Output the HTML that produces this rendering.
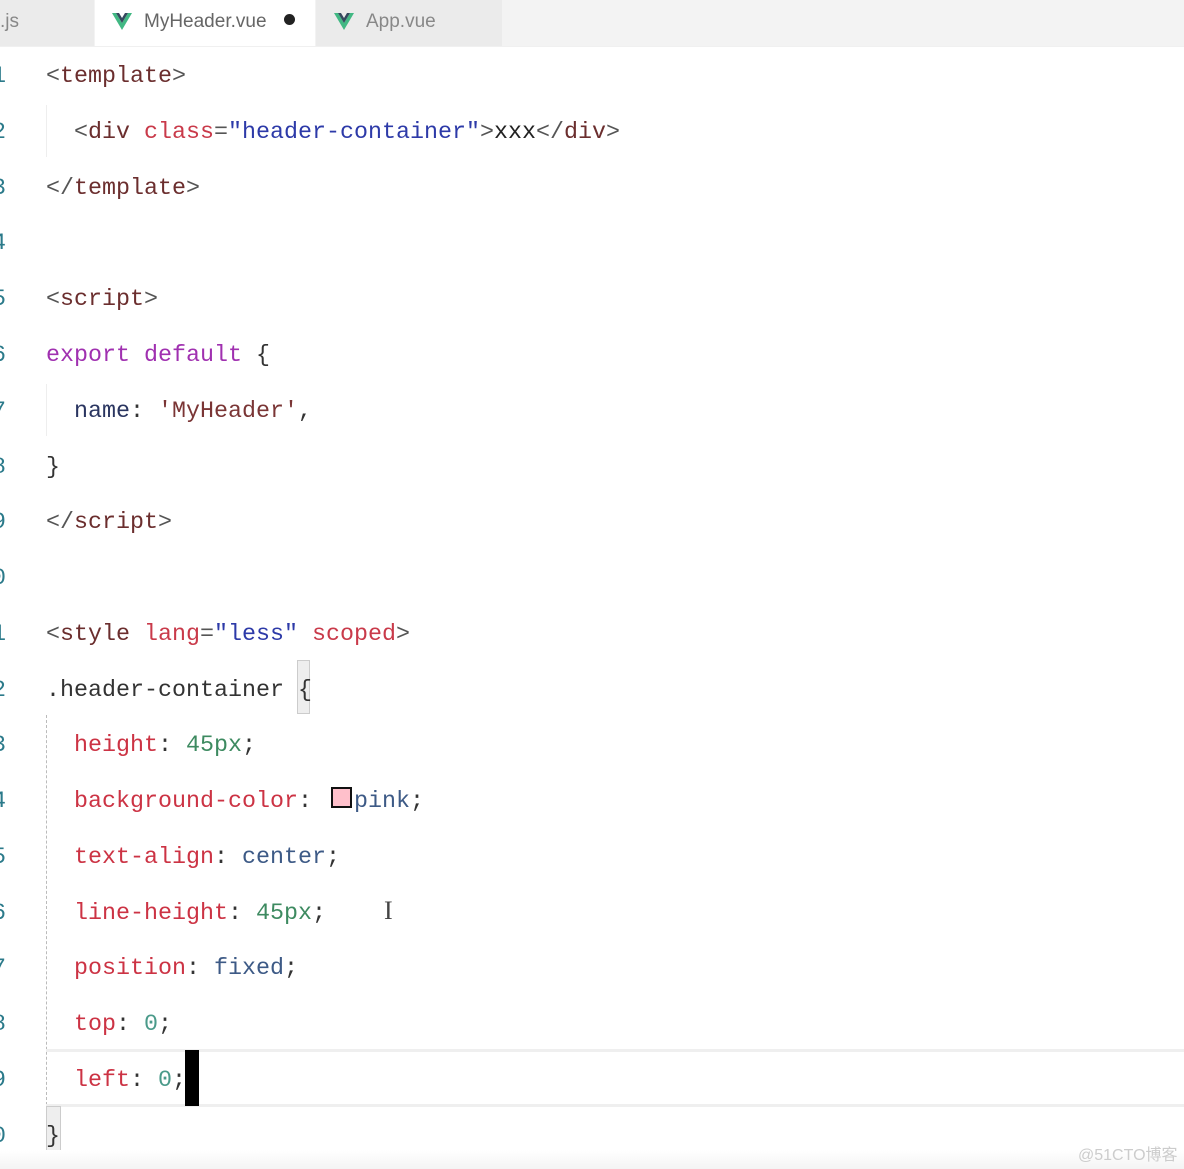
<!DOCTYPE html>
<html><head><meta charset="utf-8"><style>
html,body{margin:0;padding:0;width:1184px;height:1169px;overflow:hidden;background:#fff;position:relative}
.tabs{position:absolute;left:0;top:0;width:1184px;height:46px;background:#f3f3f3;border-bottom:1px solid #f0f0f0}
.tab{position:absolute;top:0;height:46px;font:19px "Liberation Sans",sans-serif;line-height:44px;color:#888}
.l{position:absolute;left:46px;font:23.33px/30px "Liberation Mono",monospace;white-space:pre;color:#333;margin-top:2px}
.n{position:absolute;left:-8px;width:14px;text-align:right;font:23.33px/30px "Liberation Mono",monospace;color:#2b7a8a;margin-top:2px}
.t{color:#6b2e2e}.p{color:#555}.a{color:#c93a4a}.s{color:#2d3aa8}.k{color:#a030b0}.r{color:#cc3344}.v{color:#3d5a86}.g{color:#3d8a60}.z{color:#4a9a8a}.m{color:#7a3535}
</style></head><body>
<div class="tabs">
<div class="tab" style="left:0;width:94px;background:#ebebeb;"><span>.js</span></div>
<div class="tab" style="left:95px;width:220px;background:#fff;color:#666">
<svg style="position:absolute;left:17px;top:13px" width="20" height="17" viewBox="0 0 20 17"><path d="M0 0h4l6 10 6-10h4L10 17z" fill="#41b883"/><path d="M4 0h3l3 5 3-5h3L10 10z" fill="#35495e"/></svg>
<span style="position:absolute;left:49px;top:0">MyHeader.vue</span>
<span style="position:absolute;left:189px;top:14px;width:11px;height:11px;border-radius:50%;background:#222"></span></div>
<div class="tab" style="left:316px;width:186px;background:#ebebeb;">
<svg style="position:absolute;left:18px;top:13px" width="20" height="17" viewBox="0 0 20 17"><path d="M0 0h4l6 10 6-10h4L10 17z" fill="#41b883"/><path d="M4 0h3l3 5 3-5h3L10 10z" fill="#35495e"/></svg>
<span style="position:absolute;left:50px;top:0">App.vue</span></div>
</div>
<div style="position:absolute;left:46px;top:105px;width:1px;height:52px;background:#eee"></div>
<div style="position:absolute;left:46px;top:384px;width:1px;height:52px;background:#eee"></div>
<div style="position:absolute;left:46px;top:715px;width:0;height:390px;border-left:1px dashed #bbb"></div>
<div style="position:absolute;left:46px;top:1049px;width:1138px;height:52px;border-top:3px solid #efefef;border-bottom:3px solid #efefef"></div>
<div style="position:absolute;left:185px;top:1050px;width:14px;height:56px;background:#000"></div>
<div style="position:absolute;left:297px;top:660px;width:13px;height:54px;background:#eee;border:1px solid #ccc;box-sizing:border-box"></div>
<div style="position:absolute;left:46px;top:1106px;width:15px;height:55px;background:#eee;border:1px solid #ccc;box-sizing:border-box"></div>
<div style="position:absolute;left:331px;top:787px;width:21px;height:21px;background:#ffc0cb;border:2px solid #111;box-sizing:border-box"></div>

<div class="n" style="top:60px">1</div><div class="l" style="top:60px"><span class="p">&lt;</span><span class="t">template</span><span class="p">&gt;</span></div>
<div class="n" style="top:116px">2</div><div class="l" style="top:116px">  <span class="p">&lt;</span><span class="t">div</span> <span class="a">class</span><span class="p">=</span><span class="s">"header-container"</span><span class="p">&gt;</span><span style="color:#222">xxx</span><span class="p">&lt;/</span><span class="t">div</span><span class="p">&gt;</span></div>
<div class="n" style="top:172px">3</div><div class="l" style="top:172px"><span class="p">&lt;/</span><span class="t">template</span><span class="p">&gt;</span></div>
<div class="n" style="top:227px">4</div>
<div class="n" style="top:283px">5</div><div class="l" style="top:283px"><span class="p">&lt;</span><span class="t">script</span><span class="p">&gt;</span></div>
<div class="n" style="top:339px">6</div><div class="l" style="top:339px"><span class="k">export default</span> {</div>
<div class="n" style="top:395px">7</div><div class="l" style="top:395px">  <span style="color:#2a3560">name</span>: <span class="m">'MyHeader'</span>,</div>
<div class="n" style="top:451px">8</div><div class="l" style="top:451px">}</div>
<div class="n" style="top:506px">9</div><div class="l" style="top:506px"><span class="p">&lt;/</span><span class="t">script</span><span class="p">&gt;</span></div>
<div class="n" style="top:562px">0</div>
<div class="n" style="top:618px">1</div><div class="l" style="top:618px"><span class="p">&lt;</span><span class="t">style</span> <span class="a">lang</span><span class="p">=</span><span class="s">"less"</span> <span class="a">scoped</span><span class="p">&gt;</span></div>
<div class="n" style="top:674px">2</div><div class="l" style="top:674px">.header-container {</div>
<div class="n" style="top:729px">3</div><div class="l" style="top:729px">  <span class="r">height</span>: <span class="g">45px</span>;</div>
<div class="n" style="top:785px">4</div><div class="l" style="top:785px">  <span class="r">background-color</span>:   <span class="v">pink</span>;</div>
<div class="n" style="top:841px">5</div><div class="l" style="top:841px">  <span class="r">text-align</span>: <span class="v">center</span>;</div>
<div class="n" style="top:897px">6</div><div class="l" style="top:897px">  <span class="r">line-height</span>: <span class="g">45px</span>;</div>
<div style="position:absolute;left:384px;top:896px;font:26px 'Liberation Serif',serif;color:#444">I</div>
<div class="n" style="top:952px">7</div><div class="l" style="top:952px">  <span class="r">position</span>: <span class="v">fixed</span>;</div>
<div class="n" style="top:1008px">8</div><div class="l" style="top:1008px">  <span class="r">top</span>: <span class="z">0</span>;</div>
<div class="n" style="top:1064px">9</div><div class="l" style="top:1064px">  <span class="r">left</span>: <span class="z">0</span>;</div>
<div class="n" style="top:1120px">0</div><div class="l" style="top:1120px">}</div>
<div style="position:absolute;left:0;top:1150px;width:1184px;height:19px;background:linear-gradient(#fff,#f4f4f4)"></div>
<div style="position:absolute;left:1078px;top:1141px;font:16px 'Liberation Sans','Noto Sans CJK SC',sans-serif;color:#ccc">@51CTO博客</div>
</body></html>
